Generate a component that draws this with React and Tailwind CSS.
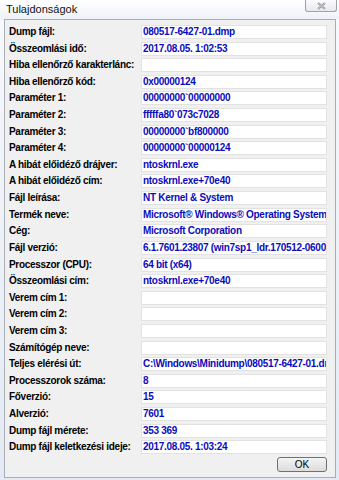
import React from "react";

const rows = [
  ["Dump fájl:", "080517-6427-01.dmp"],
  ["Összeomlási idő:", "2017.08.05. 1:02:53"],
  ["Hiba ellenőrző karakterlánc:", ""],
  ["Hiba ellenőrző kód:", "0x00000124"],
  ["Paraméter 1:", "00000000`00000000"],
  ["Paraméter 2:", "fffffa80`073c7028"],
  ["Paraméter 3:", "00000000`bf800000"],
  ["Paraméter 4:", "00000000`00000124"],
  ["A hibát előidéző drájver:", "ntoskrnl.exe"],
  ["A hibát előidéző cím:", "ntoskrnl.exe+70e40"],
  ["Fájl leírása:", "NT Kernel & System"],
  ["Termék neve:", "Microsoft® Windows® Operating System"],
  ["Cég:", "Microsoft Corporation"],
  ["Fájl verzió:", "6.1.7601.23807 (win7sp1_ldr.170512-0600)"],
  ["Processzor (CPU):", "64 bit (x64)"],
  ["Összeomlási cím:", "ntoskrnl.exe+70e40"],
  ["Verem cím 1:", ""],
  ["Verem cím 2:", ""],
  ["Verem cím 3:", ""],
  ["Számítógép neve:", ""],
  ["Teljes elérési út:", "C:\\Windows\\Minidump\\080517-6427-01.dmp"],
  ["Processzorok száma:", "8"],
  ["Főverzió:", "15"],
  ["Alverzió:", "7601"],
  ["Dump fájl mérete:", "353 369"],
  ["Dump fájl keletkezési ideje:", "2017.08.05. 1:03:24"],
];

export default function App() {
  return (
    <div
      className="w-[339px] h-[480px] bg-gradient-to-b from-[#f7fafd] to-[#e3eaf3] flex flex-col overflow-hidden"
      style={{ fontFamily: '"Liberation Sans", Arial, sans-serif' }}
    >
      <div className="relative h-[19px] flex items-center pl-[6px] bg-gradient-to-b from-[#ffffff] to-[#edf2f8]">
        <span className="text-[11px] text-[#111] leading-none">Tulajdonságok</span>
        <div className="absolute right-[2px] top-0 w-[32px] h-[12px] border border-t-0 border-[#9aa3ad] rounded-b-[3px] bg-gradient-to-b from-[#fbfbfb] to-[#e6e9ee] flex items-center justify-center">
          <svg width="9" height="8" viewBox="0 0 9 8">
            <path d="M1 1 L8 7 M8 1 L1 7" stroke="#8a8f96" strokeWidth="2" fill="none" />
            <path d="M1 1 L8 7 M8 1 L1 7" stroke="#f4f4f4" strokeWidth="0.6" fill="none" />
          </svg>
        </div>
      </div>
      <div className="ml-[4px] mr-[3px] h-[459px] border border-[#a9aeb5] bg-[#f0f0f0] pt-[5px] pl-[4px] pr-[8px] flex flex-col">
        <div className="grid grid-cols-[132px_186px] auto-rows-[14px] gap-y-[2.62px]">
          {rows.map(([label, value]) => (
            <React.Fragment key={label}>
              <div className="text-[10px] font-bold text-black leading-[14px] whitespace-nowrap tracking-[-0.3px]">
                {label}
              </div>
              <div className="bg-white border border-[#e2e2e2] overflow-hidden px-[1px] text-[10px] font-bold text-[#0b0bbb] leading-[12px] whitespace-nowrap tracking-[-0.3px]">
                {value}
              </div>
            </React.Fragment>
          ))}
        </div>
        <div className="flex justify-end mt-[3px]">
          <button className="w-[50px] h-[15px] border border-[#707070] rounded-[3px] bg-gradient-to-b from-[#f4f4f4] to-[#dcdcdc] text-[10px] text-black leading-none">
            OK
          </button>
        </div>
      </div>
    </div>
  );
}
